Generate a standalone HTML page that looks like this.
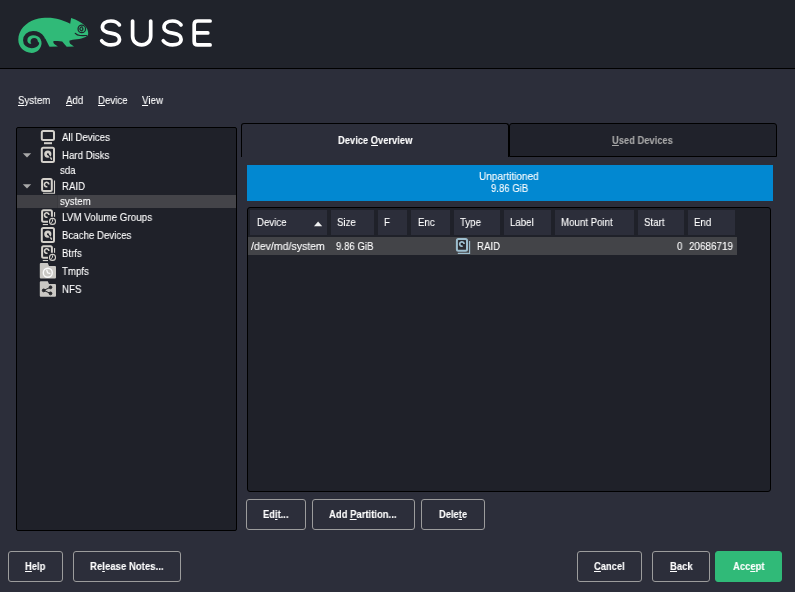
<!DOCTYPE html>
<html><head><meta charset="utf-8">
<style>
*{margin:0;padding:0;box-sizing:border-box}
html,body{width:795px;height:592px;overflow:hidden;background:#2c2e3a;font-family:"Liberation Sans",sans-serif;font-size:11px;color:#fff}
.a{position:absolute}
.t{position:absolute;white-space:nowrap;line-height:13px;transform-origin:0 0;transform:scaleX(.88);will-change:transform;-webkit-text-stroke:.1px currentColor}
.b{font-weight:bold;transform:scaleX(.85)}
u{text-decoration:none;border-bottom:1px solid currentColor;display:inline-block;line-height:10px}
#hdr{left:0;top:0;width:795px;height:69px;background:#20232b;border-bottom:1px solid #000}
#tree{left:16px;top:127px;width:221px;height:404px;background:#1f2129;border:1px solid #000;border-radius:2px}
.tab{top:123px;height:34px;border:1px solid #000;border-radius:3px 3px 0 0}
#tab1{left:241px;width:268px;background:#2c2e3a;border-bottom:none}
#tab2{left:509px;width:268px;background:#20222b}
#blue{left:247px;top:165px;width:526px;height:36px;background:#0288d1}
#tbl{left:247px;top:207px;width:524px;height:285px;background:#1f2129;border:1px solid #000;border-radius:3px}
.hc{top:210px;height:25px;background:#2c2e3a}
#row{left:248px;top:237px;width:489px;height:18px;background:#434448}
.btn{height:31px;border:1px solid #9c9c9c;border-radius:3px}
#acc{background:#30ba78;border-color:#30ba78}
#sel{left:17px;top:195px;width:219px;height:13px;background:linear-gradient(90deg,#404045 0,#404045 40px,#3b3b40 40px,#3b3b40 41px,#444449 41px)}
</style></head><body>
<div id="hdr" class="a"></div>
<svg class="a" style="left:0;top:0" width="220" height="68" viewBox="0 0 220 68">
<path fill="#30ba78" d="M18.3,39.8 C18.3,30 26,22.5 35,19.5 C40,18 44,17.8 47.5,17.8 C56,17.8 64,20.5 70.2,23.7 L71.1,18 C77,20 82,22.5 84.8,25.6 C87.3,28.5 88.4,31.5 88.2,34.1 C88,35.6 87,36.4 85.5,36.9 C83,38 80,38.8 77,39.2 C74,39.6 71,40 69.6,40.6 C69.2,41.5 69.5,42.8 70.2,43.8 L74,46.6 L66.7,46.8 C65,45 63.5,43 62.2,41.5 C59,41.2 56,41 53.6,41 C53,42 53.5,43.5 54.6,44.3 L57.9,46.6 L49.6,46.8 C48.5,45 46.8,41.5 45.2,38.5 L41.7,42 C41.6,48.5 37.2,52.9 31.7,52.9 C24,52.9 18.3,47 18.3,39.8Z"/>
<path fill="none" stroke="#20232b" stroke-width="4.3" stroke-linecap="round" d="M44.6,47 C44.4,44 43.8,40.8 42.3,37.8 C40.3,34.5 37,33.1 33,33.1 C28.3,33.1 25.2,36.5 25.2,40.2 C25.2,43.8 28,46 31.5,46 C34,46 36,45 37,43.5"/>
<circle cx="34.2" cy="41.5" r="3.6" fill="#20232b"/>
<circle cx="81.8" cy="28.9" r="3.75" fill="none" stroke="#20232b" stroke-width="1.2"/>
<path fill="none" stroke="#20232b" stroke-width="1.2" d="M83.02,27.45 A1.9,1.9 0 1 0 83.02,30.35"/>
<circle cx="82.7" cy="29" r="0.95" fill="#20232b"/>
<path fill="none" stroke="#20232b" stroke-width="1.2" stroke-linecap="round" d="M75.3,33.3 C76.5,34.6 78,35.3 80,35.5 C82,35.7 84,35.6 86.5,35.5"/>
<g fill="none" stroke="#fff" stroke-width="3.7" stroke-linecap="round" stroke-linejoin="round">
<path d="M119.4,24.9 C117.5,22.2 114.5,21 110.9,21 C106,21 102.4,23.6 102.4,27.4 C102.4,31.2 106,32.3 111,33.1 C116,33.9 119.5,35.2 119.5,39.2 C119.5,42.8 115.8,44.9 111,44.9 C107,44.9 103.8,43.4 101.7,40.8"/>
<path d="M132.6,21 V35.9 C132.6,41.2 136.6,44.9 141.65,44.9 C146.7,44.9 150.7,41.2 150.7,35.9 V21"/>
<path d="M181,24.9 C179.1,22.2 176.1,21 172.5,21 C167.6,21 164,23.6 164,27.4 C164,31.2 167.6,32.3 172.6,33.1 C177.6,33.9 181.1,35.2 181.1,39.2 C181.1,42.8 177.4,44.9 172.6,44.9 C168.6,44.9 165.4,43.4 163.3,40.8"/>
<path d="M210.1,21 H197.7 C195.6,21 194.2,22.4 194.2,24.5 V41.4 C194.2,43.5 195.6,44.9 197.7,44.9 H210.1 M194.2,32.9 H207.8"/>
</g>
</svg>

<!-- menu -->
<span class="t" style="left:18px;top:94px"><u>S</u>ystem</span>
<span class="t" style="left:66px;top:94px"><u>A</u>dd</span>
<span class="t" style="left:98px;top:94px"><u>D</u>evice</span>
<span class="t" style="left:142px;top:94px"><u>V</u>iew</span>

<!-- tree -->
<div id="tree" class="a"></div>
<div id="sel" class="a"></div>
<span class="t" style="left:62px;top:131px">All Devices</span>
<span class="t" style="left:62px;top:149px">Hard Disks</span>
<span class="t" style="left:60px;top:163.5px">sda</span>
<span class="t" style="left:62px;top:180px">RAID</span>
<span class="t" style="left:60px;top:195px">system</span>
<span class="t" style="left:62px;top:211px;transform:scaleX(.895)">LVM Volume Groups</span>
<span class="t" style="left:62px;top:229px">Bcache Devices</span>
<span class="t" style="left:62px;top:247px">Btrfs</span>
<span class="t" style="left:62px;top:265px">Tmpfs</span>
<span class="t" style="left:62px;top:283px">NFS</span>

<svg class="a" style="left:0;top:0;z-index:5" width="795" height="300" viewBox="0 0 795 300">
<g fill="#a9a9a9"><path d="M22.8,153.3 H31.2 L27,157.5Z"/><path d="M22.8,184.2 H31.2 L27,188.4Z"/></g>
<path fill="#f0f0f0" d="M314,226.2 H322.2 L318.1,221.6Z"/>
<g fill="none" stroke="#d4d1cb" stroke-width="2">
<rect x="41.8" y="130.9" width="12.2" height="9.2" rx="1.5"/>
<rect x="41.8" y="147.8" width="12.2" height="14.2" rx="1.5"/>
<rect x="41.8" y="227.9" width="12.2" height="14.1" rx="1.5"/>
<rect x="42.1" y="179.1" width="9.7" height="11.9" rx="1.5"/>
<path d="M48,221.7 H43.6 Q42.1,221.7 42.1,220.2 V211.7 Q42.1,210.2 43.6,210.2 H50.4 Q51.9,210.2 51.9,211.7 V216.8"/>
<path d="M48,257.7 H43.6 Q42.1,257.7 42.1,256.2 V247.7 Q42.1,246.2 43.6,246.2 H50.4 Q51.9,246.2 51.9,247.7 V252.8"/>
</g>
<g fill="#d4d1cb">
<rect x="44" y="142.2" width="8" height="2"/>
<rect x="42.8" y="224" width="5.2" height="1.1"/>
<rect x="42.8" y="260" width="5.2" height="1.1"/>
<rect x="54" y="212.1" width="1.1" height="4.7"/>
<rect x="54" y="248.1" width="1.1" height="4.7"/>
</g>
<g fill="none" stroke="#d4d1cb" stroke-width="1.1">
<path d="M43,193.3 H54.5 V180.6"/>
<circle cx="52.5" cy="221.4" r="3"/>
<circle cx="52.5" cy="257.4" r="3"/>
<path d="M52.5,219.4 V221.4 L51,222.7 M52.5,255.4 V257.4 L51,258.7" stroke-width="1"/>
</g>
<g fill="#d4d1cb">
<circle cx="47.8" cy="154.1" r="3.6"/>
<circle cx="47.8" cy="234.1" r="3.6"/>
</g>
<g stroke="#1f2129" stroke-width="1.2" stroke-linecap="round">
<path d="M48,154.3 L50.6,157.6 M48,234.3 L50.6,237.6"/>
</g>
<g fill="#1f2129"><circle cx="47.9" cy="154.2" r="1"/><circle cx="47.9" cy="234.2" r="1"/></g>
<g stroke="#d4d1cb" stroke-width="1.5" stroke-linecap="round"><path d="M50.8,158 L51.5,159.2 M50.8,238 L51.5,239.2"/></g>
<g fill="none" stroke="#d4d1cb" stroke-width="1.6">
<path d="M48.80,184.50 A2.2,2.2 0 1 0 47.35,186.57"/>
<path d="M48.90,215.00 A2.2,2.2 0 1 0 47.45,217.07"/>
<path d="M48.90,251.00 A2.2,2.2 0 1 0 47.45,253.07"/>
</g>
<g fill="#c9c7c3">
<path d="M39.8,264 Q39.8,263 40.8,263 H47.8 L49,266.1 H55 Q56,266.1 56,267.1 V277.6 Q56,278.6 55,278.6 H40.8 Q39.8,278.6 39.8,277.6Z"/>
<path d="M39.8,282.3 Q39.8,281.3 40.8,281.3 H47.8 L49,284.1 H55 Q56,284.1 56,285.1 V295.8 Q56,296.8 55,296.8 H40.8 Q39.8,296.8 39.8,295.8Z"/>
</g>
<circle cx="47.8" cy="272.7" r="4.5" fill="none" stroke="#fafafa" stroke-width="1.4"/>
<path d="M46.6,269.6 L47.6,272.8 L50.3,273.6" fill="none" stroke="#fafafa" stroke-width="1.4"/>
<g stroke="#25262a" stroke-width="1" fill="#25262a">
<path d="M50.5,287.3 L43.7,290.4 L50.5,293.4" fill="none"/>
<circle cx="50.5" cy="287.3" r="1.4"/><circle cx="43.7" cy="290.4" r="1.4"/><circle cx="50.5" cy="293.4" r="1.4"/>
</g>
<g>
<rect x="456.9" y="239" width="10.1" height="11.7" rx="1.5" fill="#2b2c31" stroke="#9ebfcf" stroke-width="2"/>
<path d="M457.8,253.4 H469.6 V241" fill="none" stroke="#9ebfcf" stroke-width="1.1"/>
<path d="M464.10,244.00 A2.2,2.2 0 1 0 462.65,246.07" fill="none" stroke="#9ebfcf" stroke-width="1.7"/><circle cx="461.9" cy="244" r="0.7" fill="#1a1b1f"/>
</g>
</svg>
<!-- tabs -->
<div id="tab2" class="a tab"></div>
<div id="tab1" class="a tab"></div>
<span class="t b" style="left:338px;top:134px">Device <u>O</u>verview</span>
<span class="t b" style="left:612px;top:134px;color:#a8a8a8"><u>U</u>sed Devices</span>

<div id="blue" class="a"></div>
<span class="t" style="left:479px;top:170px;transform:scaleX(.912)">Unpartitioned</span>
<span class="t" style="left:491px;top:182px;transform:scaleX(.868)">9.86 GiB</span>

<div id="tbl" class="a"></div>
<div class="a hc" style="left:250px;width:77px"></div>
<div class="a hc" style="left:331px;width:43px"></div>
<div class="a hc" style="left:378px;width:29px"></div>
<div class="a hc" style="left:411px;width:39px"></div>
<div class="a hc" style="left:454px;width:46px"></div>
<div class="a hc" style="left:504px;width:47px"></div>
<div class="a hc" style="left:555px;width:79px"></div>
<div class="a hc" style="left:638px;width:46px"></div>
<div class="a hc" style="left:688px;width:47px"></div>
<span class="t" style="left:257px;top:216px">Device</span>
<span class="t" style="left:337px;top:216px">Size</span>
<span class="t" style="left:384px;top:216px">F</span>
<span class="t" style="left:418px;top:216px">Enc</span>
<span class="t" style="left:460px;top:216px">Type</span>
<span class="t" style="left:510px;top:216px">Label</span>
<span class="t" style="left:561px;top:216px">Mount Point</span>
<span class="t" style="left:644px;top:216px">Start</span>
<span class="t" style="left:694px;top:216px">End</span>

<div id="row" class="a"></div>
<span class="t" style="left:251px;top:240px;transform:scaleX(.958)">/dev/md/system</span>
<span class="t" style="left:336px;top:240px;transform:scaleX(.874)">9.86 GiB</span>
<span class="t" style="left:477px;top:240px">RAID</span>
<span class="t" style="left:677px;top:240px">0</span>
<span class="t" style="left:689px;top:240px;transform:scaleX(.90)">20686719</span>

<!-- buttons -->
<div class="a btn" style="left:246px;top:499px;width:60px"></div>
<div class="a btn" style="left:312px;top:499px;width:103px"></div>
<div class="a btn" style="left:421px;top:499px;width:64px"></div>
<span class="t b" style="left:263px;top:508px">Ed<u>i</u>t...</span>
<span class="t b" style="left:329px;top:508px;transform:scaleX(.862)">Add <u>P</u>artition...</span>
<span class="t b" style="left:439px;top:508px">Dele<u>t</u>e</span>

<div class="a btn" style="left:8px;top:551px;width:55px"></div>
<div class="a btn" style="left:73px;top:551px;width:108px"></div>
<div class="a btn" style="left:577px;top:551px;width:65px"></div>
<div class="a btn" style="left:652px;top:551px;width:58px"></div>
<div class="a btn" id="acc" style="left:715px;top:551px;width:67px"></div>
<span class="t b" style="left:25px;top:560px"><u>H</u>elp</span>
<span class="t b" style="left:90px;top:560px;transform:scaleX(.872)">Re<u>l</u>ease Notes...</span>
<span class="t b" style="left:594px;top:560px"><u>C</u>ancel</span>
<span class="t b" style="left:670px;top:560px;transform:scaleX(.86)"><u>B</u>ack</span>
<span class="t b" style="left:733px;top:560px;transform:scaleX(.86)">Acc<u>e</u>pt</span>

</body></html>
